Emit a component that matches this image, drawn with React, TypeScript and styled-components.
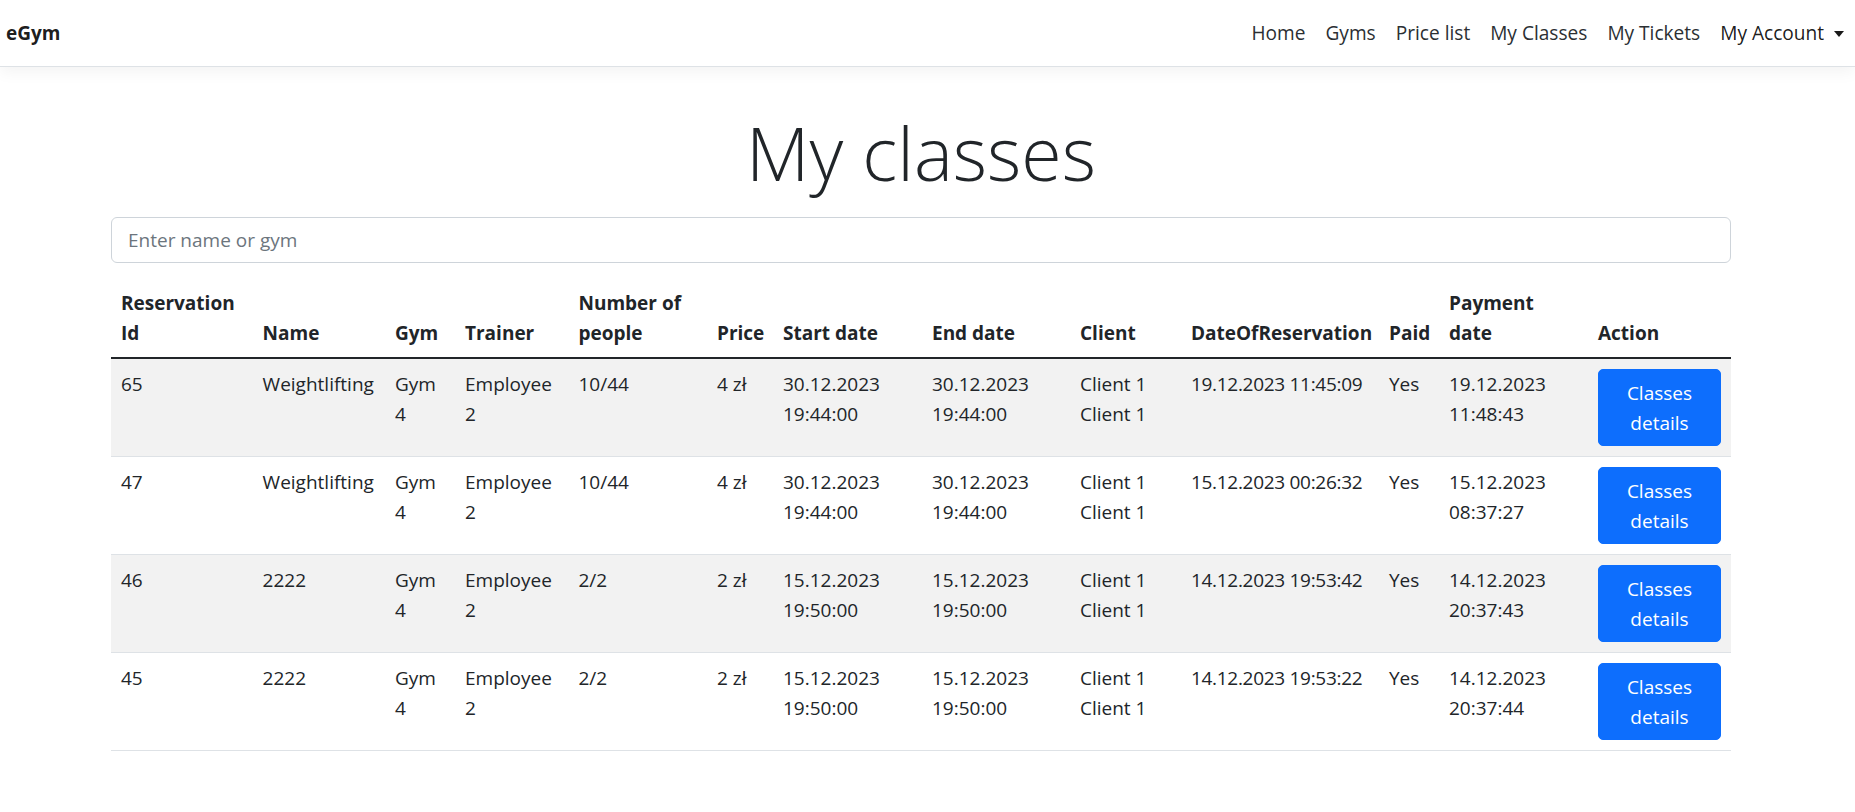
import React from "react";
import styled, { createGlobalStyle } from "styled-components";

const GlobalStyle = createGlobalStyle`
  html, body { margin: 0; padding: 0; background: #fff; }
  body {
    font-family: "Open Sans", "Noto Sans", sans-serif;
    font-size: 19px;
    line-height: 30px;
    color: #212529;
  }
  * { box-sizing: border-box; }
`;

const Navbar = styled.nav`
  height: 67px;
  display: flex;
  align-items: center;
  padding: 0 1px 0 6px;
  background: #fff;
  border-bottom: 1px solid #dee2e6;
  box-shadow: 0 5px 15px rgba(0, 0, 0, 0.05);
`;

const Brand = styled.a`
  font-weight: 700;
  font-size: 19px;
  color: rgba(0, 0, 0, 0.9);
  text-decoration: none;
`;

const NavList = styled.ul`
  list-style: none;
  margin: 0 0 0 auto;
  padding: 0;
  display: flex;
  align-items: center;
`;

const NavLink = styled.a<{ $dropdown?: boolean }>`
  display: flex;
  align-items: center;
  padding: 0 10px;
  color: ${(p) => (p.$dropdown ? "rgba(0,0,0,0.9)" : "#2b2f33")};
  text-decoration: none;
  font-size: 19.1px;
  ${(p) =>
    p.$dropdown &&
    `
    &::after {
      content: "";
      display: inline-block;
      margin-left: 10px;
      margin-top: 1px;
      border-top: 6px solid currentColor;
      border-left: 5.5px solid transparent;
      border-right: 5.5px solid transparent;
    }
  `}
`;

const Main = styled.main`
  padding-right: 13px;
`;

const Container = styled.div`
  width: 1620px;
  margin: 0 auto;
`;

const Title = styled.h1`
  margin: 40px 0 19px;
  text-align: center;
  font-family: "Open Sans", sans-serif;
  font-weight: 300;
  font-size: 73.5px;
  line-height: 91px;
  color: #212529;
`;

const SearchInput = styled.input`
  display: block;
  width: 100%;
  height: 46px;
  padding: 0 16px;
  font-family: "Open Sans", sans-serif;
  font-size: 19px;
  color: #212529;
  background: #fff;
  border: 1px solid #ced4da;
  border-radius: 6px;
  outline: none;
  margin-bottom: 15px;
  &::placeholder { color: #6c757d; }
`;

const Table = styled.table`
  width: 1620px;
  table-layout: fixed;
  border-collapse: collapse;
`;

const Col = styled.col<{ $w: number }>`
  width: ${(p) => p.$w}px;
`;

const Th = styled.th`
  text-align: left;
  vertical-align: bottom;
  font-weight: 700;
  padding: 10px 10px 9px;
  border-bottom: 2px solid #212529;
`;

const Tr = styled.tr<{ $striped: boolean }>`
  background: ${(p) => (p.$striped ? "#f2f2f2" : "#fff")};
  border-bottom: 1px solid #dee2e6;
`;

const Td = styled.td<{ $nowrap?: boolean }>`
  vertical-align: top;
  padding: 10px;
  ${(p) => (p.$nowrap ? "white-space: nowrap; letter-spacing: -0.3px;" : "")}
`;

const Button = styled.button`
  display: inline-block;
  width: 100%;
  padding: 7.5px 15px;
  font-family: "Open Sans", sans-serif;
  font-size: 19px;
  line-height: 30px;
  color: #fff;
  background: #0d6efd;
  border: 1px solid #0d6efd;
  border-radius: 5px;
  text-align: center;
  cursor: pointer;
`;

const widths = [141.6, 132.4, 70, 113.5, 138.5, 66, 149, 148, 111, 198, 60, 149, 143];

const headers = [
  "Reservation Id",
  "Name",
  "Gym",
  "Trainer",
  "Number of people",
  "Price",
  "Start date",
  "End date",
  "Client",
  "DateOfReservation",
  "Paid",
  "Payment date",
  "Action",
];

type Row = {
  id: string;
  name: string;
  people: string;
  price: string;
  start: string;
  end: string;
  reserved: string;
  paidAt: string;
};

const rows: Row[] = [
  { id: "65", name: "Weightlifting", people: "10/44", price: "4 zł", start: "30.12.2023 19:44:00", end: "30.12.2023 19:44:00", reserved: "19.12.2023 11:45:09", paidAt: "19.12.2023 11:48:43" },
  { id: "47", name: "Weightlifting", people: "10/44", price: "4 zł", start: "30.12.2023 19:44:00", end: "30.12.2023 19:44:00", reserved: "15.12.2023 00:26:32", paidAt: "15.12.2023 08:37:27" },
  { id: "46", name: "2222", people: "2/2", price: "2 zł", start: "15.12.2023 19:50:00", end: "15.12.2023 19:50:00", reserved: "14.12.2023 19:53:42", paidAt: "14.12.2023 20:37:43" },
  { id: "45", name: "2222", people: "2/2", price: "2 zł", start: "15.12.2023 19:50:00", end: "15.12.2023 19:50:00", reserved: "14.12.2023 19:53:22", paidAt: "14.12.2023 20:37:44" },
];

export default function App() {
  return (
    <>
      <GlobalStyle />
      <Navbar>
        <Brand href="#">eGym</Brand>
        <NavList>
          <li><NavLink href="#">Home</NavLink></li>
          <li><NavLink href="#">Gyms</NavLink></li>
          <li><NavLink href="#">Price list</NavLink></li>
          <li><NavLink href="#">My Classes</NavLink></li>
          <li><NavLink href="#">My Tickets</NavLink></li>
          <li><NavLink href="#" $dropdown>My Account</NavLink></li>
        </NavList>
      </Navbar>
      <Main>
        <Container>
          <Title>My classes</Title>
          <SearchInput placeholder="Enter name or gym" />
          <Table>
            <colgroup>
              {widths.map((w, i) => (
                <Col key={i} $w={w} />
              ))}
            </colgroup>
            <thead>
              <tr>
                {headers.map((h) => (
                  <Th key={h}>{h}</Th>
                ))}
              </tr>
            </thead>
            <tbody>
              {rows.map((r, i) => (
                <Tr key={r.id} $striped={i % 2 === 0}>
                  <Td>{r.id}</Td>
                  <Td>{r.name}</Td>
                  <Td>Gym 4</Td>
                  <Td>Employee 2</Td>
                  <Td>{r.people}</Td>
                  <Td>{r.price}</Td>
                  <Td>{r.start}</Td>
                  <Td>{r.end}</Td>
                  <Td>Client 1 Client 1</Td>
                  <Td $nowrap>{r.reserved}</Td>
                  <Td>Yes</Td>
                  <Td>{r.paidAt}</Td>
                  <Td>
                    <Button>Classes details</Button>
                  </Td>
                </Tr>
              ))}
            </tbody>
          </Table>
        </Container>
      </Main>
    </>
  );
}
